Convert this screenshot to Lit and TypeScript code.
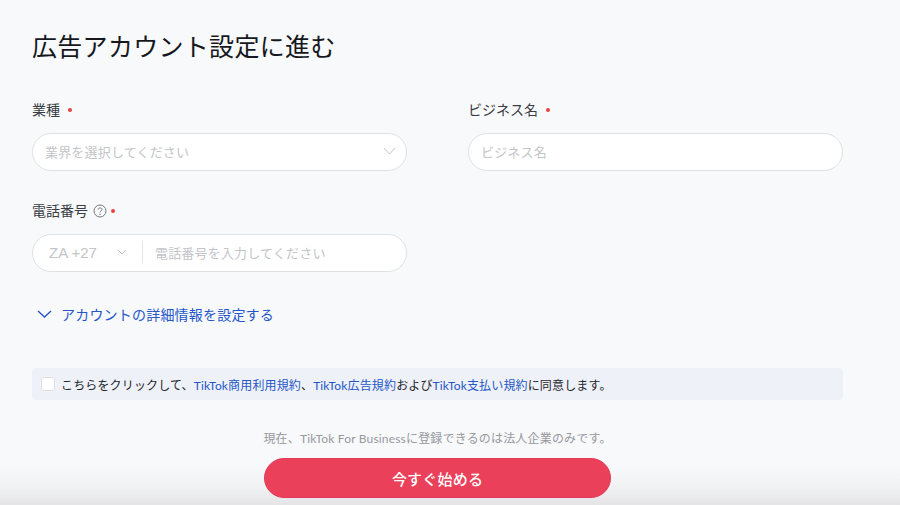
import { LitElement, html, css } from "lit";
import { customElement } from "lit/decorators.js";

@customElement("app-root")
export class AppRoot extends LitElement {
  static styles = css`
    :host {
      display: block;
      position: relative;
      width: 900px;
      height: 505px;
      overflow: hidden;
      background: #f8f9fb;
      font-family: Lato, "Noto Sans CJK JP", "Noto Sans", sans-serif;
      color: #22252b;
    }
    .page {
      position: relative;
      display: flex;
      flex-direction: column;
      padding: 28px 57px 0 32px;
    }
    h1 {
      margin: 0;
      font-size: 25px;
      line-height: 36px;
      font-weight: 400;
      letter-spacing: 0.3px;
      color: #16181d;
      height: 36px;
    }
    .grid {
      display: grid;
      grid-template-columns: 375px 375px;
      column-gap: 61px;
      margin-top: 35px;
    }
    .field { display: flex; flex-direction: column; height: 101px; }
    .label {
      display: flex;
      align-items: center;
      height: 22px;
      font-size: 14px;
      line-height: 22px;
      color: #3a3d44;
      margin-bottom: 12px;
    }
    .dot {
      width: 4px;
      height: 4px;
      border-radius: 50%;
      background: #e8413f;
      margin-left: 8px;
    }
    .dot.near { margin-left: 4px; }
    .help { margin-left: 5px; display: block; }
    .input {
      box-sizing: border-box;
      height: 38px;
      display: flex;
      align-items: center;
      background: #fff;
      border: 1px solid #e0e1e4;
      border-radius: 19px;
      padding: 0 10px 2px 12px;
      font-size: 13px;
      letter-spacing: 0.18px;
      color: #c3c5c9;
    }
    .grow { flex: 1; }
    .code {
      font-family: "Liberation Sans", Arial, sans-serif;
      font-size: 15px;
      letter-spacing: 0;
      width: 68px;
      padding-left: 4px;
    }
    .sep { width: 1px; height: 22px; background: #e3e4e6; margin: 0 12px 0 15px; }
    .link-row {
      display: flex;
      align-items: center;
      gap: 9px;
      height: 22px;
      margin-top: 2px;
      padding-left: 5px;
      font-size: 14px;
      letter-spacing: 0.2px;
      color: #2456c8;
      cursor: pointer;
    }
    .agree {
      display: flex;
      align-items: center;
      box-sizing: border-box;
      height: 32px;
      width: 811px;
      margin-top: 43px;
      padding-left: 9px;
      border-radius: 4px;
      background: #eef1f7;
      font-size: 12px;
      letter-spacing: 0.15px;
      color: #22252b;
    }
    .box {
      box-sizing: border-box;
      width: 14px;
      height: 14px;
      background: #fff;
      border: 1px solid #dfe0e4;
      border-radius: 2px;
      margin-right: 6px;
    }
    a { color: #2456c8; text-decoration: none; }
    .notice {
      margin: 30px 0 0;
      width: 811px;
      text-align: center;
      font-size: 12px;
      letter-spacing: 0.18px;
      line-height: 18px;
      color: #96989d;
    }
    button {
      display: block;
      align-self: flex-start;
      margin: 10px 0 0 232px;
      width: 347px;
      height: 40px;
      border: 1px solid #e2395a;
      border-radius: 20px;
      background: #ea4059;
      color: #fff;
      font: 500 15px "Noto Sans CJK JP", sans-serif;
      letter-spacing: 0.2px;
      padding: 0;
    }
    .fade {
      position: absolute;
      left: 0;
      right: 0;
      bottom: 0;
      height: 40px;
      background: linear-gradient(to bottom, rgba(228,228,231,0), rgba(228,228,231,0.35) 55%, rgba(228,228,231,1));
      pointer-events: none;
    }
  `;

  private chevron(w: number, h: number, color: string, sw: number) {
    return html`<svg width=${w} height=${h} viewBox="0 0 ${w} ${h}" fill="none">
      <path d="M1 1 L${w / 2} ${h - 1} L${w - 1} 1" stroke=${color} stroke-width=${sw} />
    </svg>`;
  }

  render() {
    return html`
      <div class="fade"></div>
      <div class="page">
        <h1>広告アカウント設定に進む</h1>
        <div class="grid">
          <div class="field">
            <div class="label">業種<span class="dot"></span></div>
            <div class="input">
              <span class="grow">業界を選択してください</span>
              ${this.chevron(13, 8, "#c3c5c9", 1)}
            </div>
          </div>
          <div class="field">
            <div class="label">ビジネス名<span class="dot"></span></div>
            <div class="input"><span class="grow">ビジネス名</span></div>
          </div>
          <div class="field">
            <div class="label">
              電話番号
              <svg class="help" width="14" height="14" viewBox="0 0 14 14" fill="none">
                <circle cx="7" cy="7" r="6" stroke="#77797e" stroke-width="1" />
                <path d="M5.2 5.6 C5.2 3.4 8.9 3.4 8.9 5.5 C8.9 6.9 7 6.8 7 8.4" stroke="#77797e" stroke-width="1" />
                <circle cx="7" cy="10.2" r="0.7" fill="#77797e" />
              </svg>
              <span class="dot near"></span>
            </div>
            <div class="input">
              <span class="code">ZA +27</span>
              ${this.chevron(10, 6, "#b8babe", 1)}
              <span class="sep"></span>
              <span class="grow">電話番号を入力してください</span>
            </div>
          </div>
        </div>
        <div class="link-row">
          ${this.chevron(15, 8, "#2456c8", 1.4)}
          <span>アカウントの詳細情報を設定する</span>
        </div>
        <div class="agree">
          <span class="box"></span>
          <span>こちらをクリックして、<a href="#">TikTok商用利用規約</a>、<a href="#">TikTok広告規約</a>および<a href="#">TikTok支払い規約</a>に同意します。</span>
        </div>
        <p class="notice">現在、TikTok For Businessに登録できるのは法人企業のみです。</p>
        <button>今すぐ始める</button>
      </div>
    `;
  }
}
